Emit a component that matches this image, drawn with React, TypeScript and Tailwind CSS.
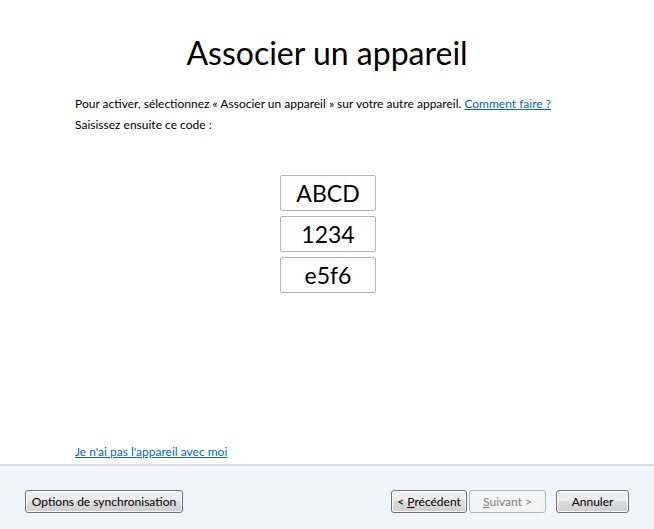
import React from 'react'

const font = { fontFamily: 'Lato, "Noto Sans", sans-serif' }

function WinButton({
  children,
  disabled,
  className = '',
}: {
  children: React.ReactNode
  disabled?: boolean
  className?: string
}) {
  return (
    <button
      disabled={disabled}
      className={
        'h-[23px] rounded-[3px] border text-[12px] leading-none flex items-center justify-center ' +
        (disabled
          ? 'border-[#adb2b5] bg-[#f4f4f4] text-[#838383] '
          : 'border-[#707070] bg-[linear-gradient(#f2f2f2_0%,#ebebeb_50%,#dddddd_50%,#cfcfcf_100%)] text-black shadow-[inset_0_0_0_1px_#fcfcfc] ') +
        className
      }
    >
      {children}
    </button>
  )
}

export default function App() {
  const codes = ['ABCD', '1234', 'e5f6']

  return (
    <div className="w-[654px] h-[529px] flex flex-col bg-white text-black" style={font}>
      {/* Main content */}
      <div className="flex-1 flex flex-col px-[75px]">
        <h1 className="text-center text-[32px] leading-[40px] mt-[33px]">
          Associer un appareil
        </h1>

        <div className="mt-[20px] text-[12px] leading-[21px]">
          <p>
            Pour activer, sélectionnez « Associer un appareil » sur votre autre appareil.{' '}
            <a href="#" className="text-[#0066cc] underline">
              Comment faire ?
            </a>
          </p>
          <p>Saisissez ensuite ce code :</p>
        </div>

        <div className="mt-[40px] flex flex-col items-center gap-[5px] pl-[2px]">
          {codes.map((code) => (
            <div
              key={code}
              className="w-[96px] h-[36px] border border-[#b4b4b4] rounded-[2px] flex items-center justify-center text-[23px]"
            >
              {code}
            </div>
          ))}
        </div>

        <div className="flex-1" />

        <a href="#" className="text-[12px] leading-[16px] text-[#0066cc] underline mb-[4px] self-start">
          Je n'ai pas l'appareil avec moi
        </a>
      </div>

      {/* Footer */}
      <div className="h-[65px] border-t-2 border-[#d5dff0] bg-[#f1f4fb] flex items-start pt-[24px] px-[25px]">
        <WinButton className="w-[158px]">Options de synchronisation</WinButton>
        <div className="flex-1" />
        <WinButton className="w-[76px]">
          &lt;&nbsp;<span className="underline">P</span>récédent
        </WinButton>
        <WinButton disabled className="w-[77px] ml-[2px]">
          <span className="underline">S</span>uivant &gt;
        </WinButton>
        <WinButton className="w-[73px] ml-[10px]">Annuler</WinButton>
      </div>
    </div>
  )
}
